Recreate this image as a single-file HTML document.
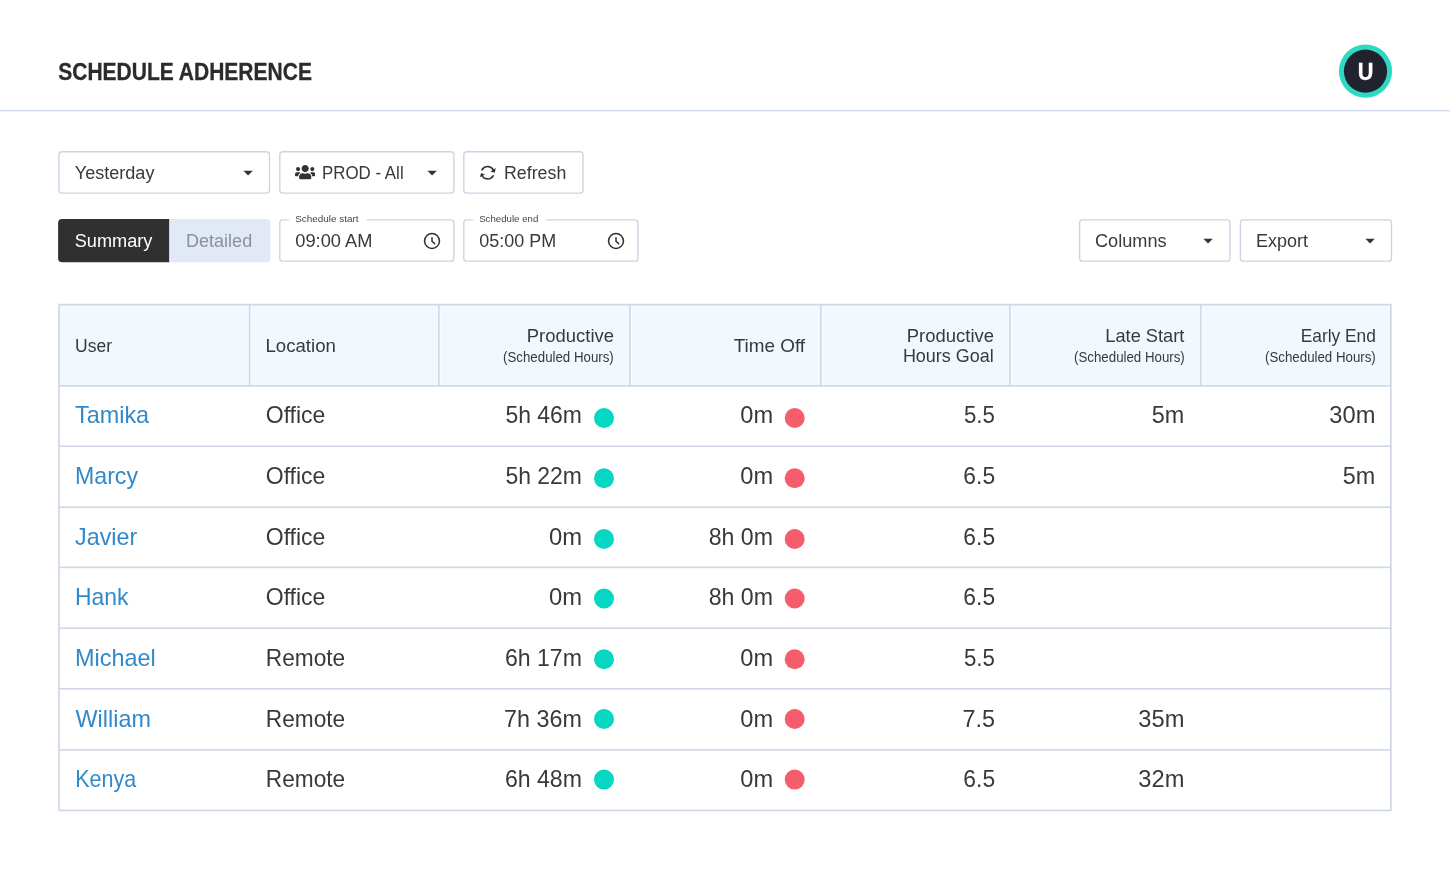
<!DOCTYPE html>
<html lang="en">
<head>
<meta charset="utf-8">
<title>Schedule Adherence</title>
<style>
*{box-sizing:border-box;margin:0;padding:0}
html,body{width:1450px;height:877px;overflow:hidden;background:#fff}
body{font-family:"Liberation Sans",sans-serif;color:#333;position:relative;will-change:transform}
.abs{position:absolute}
.t{position:absolute;white-space:nowrap;line-height:0;height:0;color:#373a3c}
.t span{line-height:0}
#hdrline{position:absolute;left:0;top:0}

</style>
</head>
<body>
<svg id="hdrline" width="1450" height="120" viewBox="0 0 1450 120"><rect x="0" y="109.900" width="1450" height="1.500" fill="#d3dcec"/></svg>
<svg class="abs" style="left:0;top:0" width="1450" height="877" viewBox="0 0 1450 877">
<rect x="58.95" y="151.75" width="210.55" height="41.35" rx="3.0" fill="#fff" stroke="#cad4e6" stroke-width="1.35"/>
<rect x="279.8" y="151.75" width="174.05" height="41.35" rx="3.0" fill="#fff" stroke="#cad4e6" stroke-width="1.35"/>
<rect x="463.8" y="151.75" width="119.20" height="41.35" rx="3.0" fill="#fff" stroke="#cad4e6" stroke-width="1.35"/>
<rect x="279.8" y="219.9" width="174.05" height="41.30" rx="3.0" fill="#fff" stroke="#cad4e6" stroke-width="1.35"/><rect x="288.8" y="218.4" width="77.90" height="3" fill="#fff"/>
<rect x="463.8" y="219.9" width="174.10" height="41.30" rx="3.0" fill="#fff" stroke="#cad4e6" stroke-width="1.35"/><rect x="473.1" y="218.4" width="72.70" height="3" fill="#fff"/>
<rect x="1079.6" y="219.9" width="150.40" height="41.30" rx="3.0" fill="#fff" stroke="#cad4e6" stroke-width="1.35"/>
<rect x="1240.4" y="219.9" width="151.10" height="41.30" rx="3.0" fill="#fff" stroke="#cad4e6" stroke-width="1.35"/>
<path d="M62.100 218.900H169.400V262.150H62.100A4 4 0 0 1 58.100 258.150V222.900A4 4 0 0 1 62.100 218.900Z" fill="#303030"/>
<path d="M169.400 218.900H266.400A4 4 0 0 1 270.400 222.900V258.150A4 4 0 0 1 266.400 262.150H169.400Z" fill="#e1e9f6"/>
<rect x="59" y="305" width="1332" height="81" fill="#f1f9ff"/>
<rect x="248.95" y="305" width="1.5" height="81" fill="#cdd6e6"/>
<rect x="250.80" y="305.500" width="0.9" height="80" fill="#f9fcff"/>
<rect x="438.15" y="305" width="1.5" height="81" fill="#cdd6e6"/>
<rect x="440.00" y="305.500" width="0.9" height="80" fill="#f9fcff"/>
<rect x="629.15" y="305" width="1.5" height="81" fill="#cdd6e6"/>
<rect x="631.00" y="305.500" width="0.9" height="80" fill="#f9fcff"/>
<rect x="820.15" y="305" width="1.5" height="81" fill="#cdd6e6"/>
<rect x="822.00" y="305.500" width="0.9" height="80" fill="#f9fcff"/>
<rect x="1009.15" y="305" width="1.5" height="81" fill="#cdd6e6"/>
<rect x="1011.00" y="305.500" width="0.9" height="80" fill="#f9fcff"/>
<rect x="1200.15" y="305" width="1.5" height="81" fill="#cdd6e6"/>
<rect x="1202.00" y="305.500" width="0.9" height="80" fill="#f9fcff"/>
<rect x="59" y="445.40" width="1332" height="1.6" fill="#cfd7e7"/>
<rect x="59" y="506.40" width="1332" height="1.6" fill="#cfd7e7"/>
<rect x="59" y="566.55" width="1332" height="1.6" fill="#cfd7e7"/>
<rect x="59" y="627.40" width="1332" height="1.6" fill="#cfd7e7"/>
<rect x="59" y="688.00" width="1332" height="1.6" fill="#cfd7e7"/>
<rect x="59" y="749.10" width="1332" height="1.6" fill="#cfd7e7"/>
<rect x="59" y="385.1" width="1332" height="1.6" fill="#cfd7e7"/>
<rect x="59.05" y="304.65" width="1331.8" height="505.8" fill="none" stroke="#cfd7e7" stroke-width="1.7"/>
<circle cx="604" cy="417.95" r="10" fill="#05d7c2"/>
<circle cx="794.700" cy="417.95" r="10" fill="#f65d6c"/>
<circle cx="604" cy="478.30" r="10" fill="#05d7c2"/>
<circle cx="794.700" cy="478.30" r="10" fill="#f65d6c"/>
<circle cx="604" cy="539.00" r="10" fill="#05d7c2"/>
<circle cx="794.700" cy="539.00" r="10" fill="#f65d6c"/>
<circle cx="604" cy="598.50" r="10" fill="#05d7c2"/>
<circle cx="794.700" cy="598.50" r="10" fill="#f65d6c"/>
<circle cx="604" cy="659.20" r="10" fill="#05d7c2"/>
<circle cx="794.700" cy="659.20" r="10" fill="#f65d6c"/>
<circle cx="604" cy="719.00" r="10" fill="#05d7c2"/>
<circle cx="794.700" cy="719.00" r="10" fill="#f65d6c"/>
<circle cx="604" cy="779.60" r="10" fill="#05d7c2"/>
<circle cx="794.700" cy="779.60" r="10" fill="#f65d6c"/>
</svg>
<svg class="abs" style="left:1330px;top:36px" width="70" height="70" viewBox="1330 36 70 70"><circle cx="1365.500" cy="71.150" r="26.600" fill="#2cd9c2"/><circle cx="1365.500" cy="71.150" r="21.600" fill="#22222e"/></svg>
<svg class="abs" style="left:242px;top:170px" width="12" height="8" viewBox="0 0 12 8"><path d="M1.400 0.700H10.800L6.100 5.500Z" fill="#333"/></svg>
<svg class="abs" style="left:295px;top:164.400px" width="20.400" height="16.320" viewBox="0 0 640 512" preserveAspectRatio="none"><path fill="#333" d="M96 224c35.300 0 64-28.700 64-64s-28.700-64-64-64-64 28.700-64 64 28.700 64 64 64zm448 0c35.300 0 64-28.700 64-64s-28.700-64-64-64-64 28.700-64 64 28.700 64 64 64zm32 32h-64c-17.600 0-33.500 7.100-45.100 18.600 40.300 22.100 68.900 62 75.100 109.400h66c17.700 0 32-14.300 32-32v-32c0-35.300-28.700-64-64-64zm-256 0c61.900 0 112-50.100 112-112S381.900 32 320 32 208 82.100 208 144s50.100 112 112 112zm76.800 32h-8.300c-20.800 10-43.900 16-68.500 16s-47.600-6-68.500-16h-8.300C179.600 288 128 339.600 128 403.200V432c0 26.500 21.500 48 48 48h288c26.500 0 48-21.500 48-48v-28.800c0-63.600-51.600-115.200-115.200-115.200zm-223.700-13.400C161.500 263.100 145.600 256 128 256H64c-35.300 0-64 28.700-64 64v32c0 17.700 14.300 32 32 32h65.900c6.300-47.400 34.900-87.300 75.200-109.400z"/></svg>
<svg class="abs" style="left:425.9px;top:170px" width="12" height="8" viewBox="0 0 12 8"><path d="M1.400 0.700H10.800L6.100 5.500Z" fill="#333"/></svg>
<svg class="abs" style="left:470px;top:158px" width="40" height="30" viewBox="470 158 40 30"><g fill="none" stroke="#333" stroke-width="1.700" stroke-linecap="round"><path d="M482.100 169.750A6.300 6.300 0 0 1 493.500 170.600"/><path d="M493.100 175.850A6.300 6.300 0 0 1 481.800 175"/></g><path fill="#333" d="M495.700 168.100L494.800 172.800L490.500 171.500Z"/><path fill="#333" d="M481.200 173.100L479.800 177.300L484.900 174.400Z"/></svg>
<svg class="abs" style="left:421.8px;top:231.0px" width="20" height="20" viewBox="0 0 20 20"><circle cx="10" cy="10" r="7.450" fill="none" stroke="#333" stroke-width="1.550"/><path d="M10 6.800V10.200L12.700 12.600" fill="none" stroke="#333" stroke-width="1.500" stroke-linecap="round" stroke-linejoin="round"/></svg>
<svg class="abs" style="left:606.0px;top:231.0px" width="20" height="20" viewBox="0 0 20 20"><circle cx="10" cy="10" r="7.450" fill="none" stroke="#333" stroke-width="1.550"/><path d="M10 6.800V10.200L12.700 12.600" fill="none" stroke="#333" stroke-width="1.500" stroke-linecap="round" stroke-linejoin="round"/></svg>
<svg class="abs" style="left:1202.2px;top:238.2px" width="12" height="8" viewBox="0 0 12 8"><path d="M1.400 0.700H10.800L6.100 5.500Z" fill="#333"/></svg>
<svg class="abs" style="left:1363.9px;top:238.2px" width="12" height="8" viewBox="0 0 12 8"><path d="M1.400 0.700H10.800L6.100 5.500Z" fill="#333"/></svg>
<div class="t" id="title" style="font-size:23.95px;color:#2b2b2b;font-weight:bold;-webkit-text-stroke:0.3px #2b2b2b;left:58px;top:71px;transform:translate(0.25px,0.70px) scaleX(0.8775);transform-origin:0 0"><span>SCHEDULE ADHERENCE</span></div>
<div class="t" id="av" style="font-size:24.00px;color:#fff;font-weight:bold;-webkit-text-stroke:0.3px #fff;left:1315px;width:100px;text-align:center;top:71px;transform:translate(0.65px,0.68px) scaleX(0.9057);transform-origin:50% 0"><span>U</span></div>
<div class="t" id="yest" style="font-size:18.76px;left:74px;top:173px;transform:translate(0.75px,0.20px) scaleX(0.9634);transform-origin:0 0"><span>Yesterday</span></div>
<div class="t" id="prod" style="font-size:18.76px;left:322px;top:173px;transform:translate(0.00px,0.20px) scaleX(0.9006);transform-origin:0 0"><span>PROD - All</span></div>
<div class="t" id="refr" style="font-size:18.76px;left:504px;top:173px;transform:translate(0.00px,0.20px) scaleX(0.9484);transform-origin:0 0"><span>Refresh</span></div>
<div class="t" id="summ" style="font-size:18.76px;color:#fff;left:74px;top:241px;transform:translate(0.75px,0.20px) scaleX(0.9684);transform-origin:0 0"><span>Summary</span></div>
<div class="t" id="deta" style="font-size:18.76px;color:#8e9095;left:186px;top:241px;transform:translate(0.00px,0.20px) scaleX(0.9621);transform-origin:0 0"><span>Detailed</span></div>
<div class="t" id="t1" style="font-size:18.76px;left:295px;top:241px;transform:translate(0.25px,0.20px) scaleX(0.9740);transform-origin:0 0"><span>09:00 AM</span></div>
<div class="t" id="t2" style="font-size:18.76px;left:479px;top:241px;transform:translate(0.25px,0.20px) scaleX(0.9583);transform-origin:0 0"><span>05:00 PM</span></div>
<div class="t" id="cols" style="font-size:18.76px;left:1095px;top:241px;transform:translate(0.00px,0.20px) scaleX(0.9689);transform-origin:0 0"><span>Columns</span></div>
<div class="t" id="expo" style="font-size:18.76px;left:1256px;top:241px;transform:translate(0.00px,0.20px) scaleX(0.9619);transform-origin:0 0"><span>Export</span></div>
<div class="t" id="l1" style="font-size:9.90px;color:#444;left:295px;top:219px;transform:translate(0.15px,0.27px) scaleX(1.0040);transform-origin:0 0"><span>Schedule start</span></div>
<div class="t" id="l2" style="font-size:9.90px;color:#444;left:479px;top:219px;transform:translate(0.15px,0.27px) scaleX(0.9789);transform-origin:0 0"><span>Schedule end</span></div>
<div class="t" id="h_user" style="font-size:18.76px;left:75px;top:345px;transform:translate(0.00px,0.90px) scaleX(0.9338);transform-origin:0 0"><span>User</span></div>
<div class="t" id="h_loc" style="font-size:18.76px;left:265px;top:345px;transform:translate(0.50px,0.90px) scaleX(0.9927);transform-origin:0 0"><span>Location</span></div>
<div class="t" id="h_prod" style="font-size:18.95px;right:836px;top:336px;transform:translate(-0.50px,0.03px) scaleX(0.9742);transform-origin:100% 0"><span>Productive</span></div>
<div class="t" id="h_prod2" style="font-size:13.80px;right:836px;top:358px;transform:translate(-0.25px,0.32px) scaleX(0.9625);transform-origin:100% 0"><span>(Scheduled Hours)</span></div>
<div class="t" id="h_off" style="font-size:18.95px;right:644px;top:345px;transform:translate(-0.50px,0.83px) scaleX(0.9965);transform-origin:100% 0"><span>Time Off</span></div>
<div class="t" id="h_goal1" style="font-size:18.95px;right:456px;top:336px;transform:translate(-0.50px,0.03px) scaleX(0.9742);transform-origin:100% 0"><span>Productive</span></div>
<div class="t" id="h_goal2" style="font-size:18.95px;right:456px;top:356px;transform:translate(0.00px,0.03px) scaleX(0.9489);transform-origin:100% 0"><span>Hours Goal</span></div>
<div class="t" id="h_late" style="font-size:18.95px;right:265px;top:336px;transform:translate(-0.75px,0.03px) scaleX(0.9626);transform-origin:100% 0"><span>Late Start</span></div>
<div class="t" id="h_late2" style="font-size:13.80px;right:265px;top:358px;transform:translate(-0.25px,0.32px) scaleX(0.9625);transform-origin:100% 0"><span>(Scheduled Hours)</span></div>
<div class="t" id="h_early" style="font-size:18.95px;right:74px;top:336px;transform:translate(-0.25px,0.03px) scaleX(0.9148);transform-origin:100% 0"><span>Early End</span></div>
<div class="t" id="h_early2" style="font-size:13.80px;right:74px;top:358px;transform:translate(-0.25px,0.32px) scaleX(0.9625);transform-origin:100% 0"><span>(Scheduled Hours)</span></div>
<div class="t" id="r0c0" style="font-size:23.81px;color:#3089cb;left:75px;top:415px;transform:translate(0.00px,0.35px) scaleX(0.9833);transform-origin:0 0"><span>Tamika</span></div>
<div class="t" id="r0c1" style="font-size:23.81px;left:265px;top:415px;transform:translate(0.75px,0.35px) scaleX(0.9664);transform-origin:0 0"><span>Office</span></div>
<div class="t" id="r0c2" style="font-size:23.81px;right:868px;top:415px;transform:translate(-0.45px,0.35px) scaleX(0.9642);transform-origin:100% 0"><span>5h 46m</span></div>
<div class="t" id="r0c3" style="font-size:23.81px;right:676px;top:415px;transform:translate(-0.90px,0.35px) scaleX(0.9918);transform-origin:100% 0"><span>0m</span></div>
<div class="t" id="r0c4" style="font-size:23.81px;right:455px;top:415px;transform:translate(-0.25px,0.35px) scaleX(0.9356);transform-origin:100% 0"><span>5.5</span></div>
<div class="t" id="r0c5" style="font-size:23.81px;right:265px;top:415px;transform:translate(-0.70px,0.35px) scaleX(0.9836);transform-origin:100% 0"><span>5m</span></div>
<div class="t" id="r0c6" style="font-size:23.81px;right:74px;top:415px;transform:translate(-0.95px,0.35px) scaleX(0.9943);transform-origin:100% 0"><span>30m</span></div>
<div class="t" id="r1c0" style="font-size:23.81px;color:#3089cb;left:75px;top:476px;transform:translate(0.00px,0.06px) scaleX(0.9721);transform-origin:0 0"><span>Marcy</span></div>
<div class="t" id="r1c1" style="font-size:23.81px;left:265px;top:476px;transform:translate(0.75px,0.06px) scaleX(0.9664);transform-origin:0 0"><span>Office</span></div>
<div class="t" id="r1c2" style="font-size:23.81px;right:868px;top:476px;transform:translate(-0.45px,0.06px) scaleX(0.9642);transform-origin:100% 0"><span>5h 22m</span></div>
<div class="t" id="r1c3" style="font-size:23.81px;right:676px;top:476px;transform:translate(-0.90px,0.06px) scaleX(0.9918);transform-origin:100% 0"><span>0m</span></div>
<div class="t" id="r1c4" style="font-size:23.81px;right:455px;top:476px;transform:translate(0.00px,0.06px) scaleX(0.9593);transform-origin:100% 0"><span>6.5</span></div>
<div class="t" id="r1c6" style="font-size:23.81px;right:74px;top:476px;transform:translate(-0.70px,0.06px) scaleX(0.9836);transform-origin:100% 0"><span>5m</span></div>
<div class="t" id="r2c0" style="font-size:23.81px;color:#3089cb;left:75px;top:537px;transform:translate(0.00px,0.28px) scaleX(0.9800);transform-origin:0 0"><span>Javier</span></div>
<div class="t" id="r2c1" style="font-size:23.81px;left:265px;top:537px;transform:translate(0.75px,0.28px) scaleX(0.9664);transform-origin:0 0"><span>Office</span></div>
<div class="t" id="r2c2" style="font-size:23.81px;right:867px;top:537px;transform:translate(-0.95px,0.28px);transform-origin:100% 0"><span>0m</span></div>
<div class="t" id="r2c3" style="font-size:23.81px;right:677px;top:537px;transform:translate(-0.15px,0.28px) scaleX(0.9724);transform-origin:100% 0"><span>8h 0m</span></div>
<div class="t" id="r2c4" style="font-size:23.81px;right:455px;top:537px;transform:translate(0.00px,0.28px) scaleX(0.9593);transform-origin:100% 0"><span>6.5</span></div>
<div class="t" id="r3c0" style="font-size:23.81px;color:#3089cb;left:75px;top:597px;transform:translate(0.00px,0.49px) scaleX(0.9626);transform-origin:0 0"><span>Hank</span></div>
<div class="t" id="r3c1" style="font-size:23.81px;left:265px;top:597px;transform:translate(0.75px,0.49px) scaleX(0.9664);transform-origin:0 0"><span>Office</span></div>
<div class="t" id="r3c2" style="font-size:23.81px;right:867px;top:597px;transform:translate(-0.95px,0.49px);transform-origin:100% 0"><span>0m</span></div>
<div class="t" id="r3c3" style="font-size:23.81px;right:677px;top:597px;transform:translate(-0.15px,0.49px) scaleX(0.9724);transform-origin:100% 0"><span>8h 0m</span></div>
<div class="t" id="r3c4" style="font-size:23.81px;right:455px;top:597px;transform:translate(0.00px,0.49px) scaleX(0.9593);transform-origin:100% 0"><span>6.5</span></div>
<div class="t" id="r4c0" style="font-size:23.81px;color:#3089cb;left:75px;top:658px;transform:translate(0.00px,0.21px) scaleX(0.9841);transform-origin:0 0"><span>Michael</span></div>
<div class="t" id="r4c1" style="font-size:23.81px;left:265px;top:658px;transform:translate(0.75px,0.21px) scaleX(0.9533);transform-origin:0 0"><span>Remote</span></div>
<div class="t" id="r4c2" style="font-size:23.81px;right:868px;top:658px;transform:translate(-0.45px,0.21px) scaleX(0.9706);transform-origin:100% 0"><span>6h 17m</span></div>
<div class="t" id="r4c3" style="font-size:23.81px;right:676px;top:658px;transform:translate(-0.90px,0.21px) scaleX(0.9918);transform-origin:100% 0"><span>0m</span></div>
<div class="t" id="r4c4" style="font-size:23.81px;right:455px;top:658px;transform:translate(-0.25px,0.21px) scaleX(0.9356);transform-origin:100% 0"><span>5.5</span></div>
<div class="t" id="r5c0" style="font-size:23.81px;color:#3089cb;left:75px;top:719px;transform:translate(0.50px,0.42px) scaleX(0.9833);transform-origin:0 0"><span>William</span></div>
<div class="t" id="r5c1" style="font-size:23.81px;left:265px;top:719px;transform:translate(0.75px,0.42px) scaleX(0.9533);transform-origin:0 0"><span>Remote</span></div>
<div class="t" id="r5c2" style="font-size:23.81px;right:868px;top:719px;transform:translate(-0.45px,0.42px) scaleX(0.9804);transform-origin:100% 0"><span>7h 36m</span></div>
<div class="t" id="r5c3" style="font-size:23.81px;right:676px;top:719px;transform:translate(-0.90px,0.42px) scaleX(0.9918);transform-origin:100% 0"><span>0m</span></div>
<div class="t" id="r5c4" style="font-size:23.81px;right:455px;top:719px;transform:translate(0.00px,0.42px) scaleX(0.9837);transform-origin:100% 0"><span>7.5</span></div>
<div class="t" id="r5c5" style="font-size:23.81px;right:265px;top:719px;transform:translate(-0.95px,0.42px) scaleX(0.9943);transform-origin:100% 0"><span>35m</span></div>
<div class="t" id="r6c0" style="font-size:23.81px;color:#3089cb;left:75px;top:779px;transform:translate(0.25px,0.14px) scaleX(0.9046);transform-origin:0 0"><span>Kenya</span></div>
<div class="t" id="r6c1" style="font-size:23.81px;left:265px;top:779px;transform:translate(0.75px,0.14px) scaleX(0.9533);transform-origin:0 0"><span>Remote</span></div>
<div class="t" id="r6c2" style="font-size:23.81px;right:868px;top:779px;transform:translate(-0.45px,0.14px) scaleX(0.9706);transform-origin:100% 0"><span>6h 48m</span></div>
<div class="t" id="r6c3" style="font-size:23.81px;right:676px;top:779px;transform:translate(-0.90px,0.14px) scaleX(0.9918);transform-origin:100% 0"><span>0m</span></div>
<div class="t" id="r6c4" style="font-size:23.81px;right:455px;top:779px;transform:translate(0.00px,0.14px) scaleX(0.9593);transform-origin:100% 0"><span>6.5</span></div>
<div class="t" id="r6c5" style="font-size:23.81px;right:265px;top:779px;transform:translate(-0.95px,0.14px) scaleX(0.9943);transform-origin:100% 0"><span>32m</span></div>
</body>
</html>
